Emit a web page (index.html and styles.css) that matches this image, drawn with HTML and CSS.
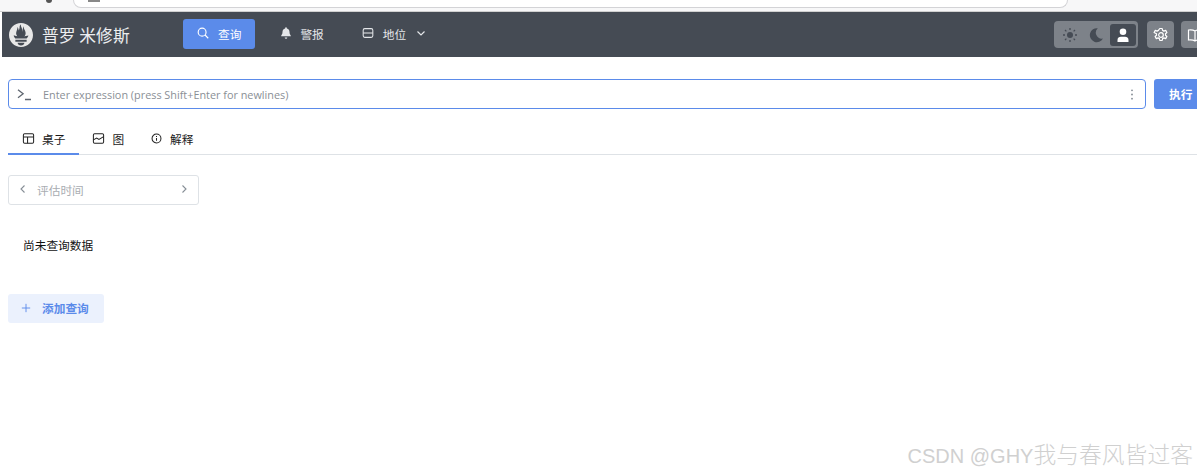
FILE: index.html
```html
<!DOCTYPE html>
<html lang="zh">
<head>
<meta charset="utf-8">
<title>Prometheus</title>
<link rel="stylesheet" href="styles.css">
</head>
<body>
<div class="chrome"><span class="chrome-dot"></span><div class="urlbar"><span class="url-mark"></span></div></div>
<div class="shell">
<header class="topbar">
  <div class="brand">
    <svg class="logo" viewBox="0 0 24 24"><path fill="#e8e8e8" d="M12 0C5.373 0 0 5.372 0 12c0 6.627 5.373 12 12 12s12-5.373 12-12c0-6.628-5.373-12-12-12zm0 22.460c-1.885 0-3.414-1.260-3.414-2.814h6.828c0 1.553-1.528 2.813-3.414 2.813zm5.640-3.745H6.360v-2.046h11.280v2.046zm-.04-3.098H6.391c-.037-.043-.075-.086-.111-.13-1.155-1.401-1.427-2.133-1.690-2.879-.005-.025 1.400.287 2.395.511 0 0 .513.119 1.262.255-.719-.843-1.146-1.915-1.146-3.010 0-2.406 1.845-4.508 1.180-6.207.648.053 1.340 1.367 1.387 3.422.689-.951.977-2.690.977-3.755 0-1.103.727-2.385 1.454-2.429-.648 1.069.168 1.984.894 4.256.272.854.237 2.290.447 3.201.070-1.892.395-4.652 1.595-5.605-.529 1.200.079 2.702.494 3.424.671 1.164 1.078 2.047 1.078 3.716 0 1.119-.413 2.172-1.110 2.996.792-.149 1.340-.283 1.340-.283l2.573-.502s-.374 1.538-1.810 3.019z"/></svg>
    <span class="brand-name">普罗 米修斯</span>
  </div>
  <nav class="nav">
    <a class="nav-item active"><svg class="nav-icon" viewBox="0 0 16 16" fill="none" stroke="currentColor" stroke-width="1.300"><circle cx="7" cy="7" r="4.500"/><path d="M10.300 10.300 14 14"/></svg>查询</a>
    <a class="nav-item bell-item"><svg class="nav-icon" viewBox="0 0 16 16" fill="currentColor"><path d="M8 1.500a1 1 0 0 1 1 1v.300c2 .5 3 2 3 4 0 2.500 1 3.300 1.500 4.200v.8h-11V11c.5-.9 1.500-1.700 1.500-4.200 0-2 1-3.500 3-4v-.3a1 1 0 0 1 1-1zM6.500 13h3a1.500 1.500 0 0 1-3 0z"/></svg>警报</a>
    <a class="nav-item"><svg class="nav-icon" viewBox="0 0 16 16" fill="none" stroke="currentColor" stroke-width="1.200"><rect x="2.500" y="3" width="11" height="10" rx="1.800"/><path d="M2.500 8h11"/></svg>地位<svg class="chev" viewBox="0 0 12 12" fill="none" stroke="currentColor" stroke-width="1.200"><path d="M2.500 4.500 6 8l3.500-3.500"/></svg></a>
  </nav>
  <div class="tools">
    <div class="theme-group">
      <span class="theme-btn"><svg viewBox="0 0 16 16" class="theme-icon"><circle cx="8" cy="8" r="3" fill="#454b54"/><path d="M8 1v2M8 13v2M1 8h2M13 8h2M3 3l1.400 1.400M11.600 11.600 13 13M3 13l1.400-1.400M11.600 4.400 13 3" stroke="#454b54" stroke-width="1.300" fill="none"/></svg></span>
      <span class="theme-btn"><svg viewBox="0 0 16 16" class="theme-icon"><path d="M9.800 1.200A7 7 0 1 0 15 11.500 6 6 0 0 1 9.800 1.200z" fill="#454b54"/></svg></span>
      <span class="theme-btn current"><svg viewBox="0 0 16 16" class="theme-icon"><circle cx="8" cy="4.800" r="3.300" fill="#fff"/><path d="M2.500 15v-2c0-2 1.600-3.200 3.500-3.200h4c1.900 0 3.500 1.200 3.500 3.200v2z" fill="#fff"/></svg></span>
    </div>
    <span class="tool-btn"><svg viewBox="0 0 16 16" class="tool-icon" fill="none" stroke="#fff" stroke-width="1.200"><path d="M6.800 1h2.400l.4 1.900 1.300.7 1.800-.7 1.200 2.100-1.400 1.300v1.400l1.400 1.300-1.200 2.100-1.800-.7-1.300.7-.4 1.900H6.800l-.4-1.900-1.300-.7-1.800.7-1.200-2.100 1.400-1.300V6.300L1.100 5l1.200-2.100 1.800.7 1.300-.7z" stroke-linejoin="round" transform="translate(0 .5)"/><circle cx="8" cy="8" r="2.300"/></svg></span>
    <span class="tool-btn"><svg viewBox="0 0 16 16" class="tool-icon" fill="none" stroke="#fff" stroke-width="1.200"><path d="M8 4C6.500 3 4 2.700 1.500 3v10c2.500-.3 5 0 6.500 1 1.500-1 4-1.300 6.500-1V3C12 2.700 9.500 3 8 4zM8 4v10"/></svg></span>
  </div>
</header>
<main class="content">
  <div class="query-row">
    <div class="expr">
      <svg class="prompt" viewBox="0 0 16 14" fill="none" stroke="#5f6670" stroke-width="1.400"><path d="M1 2l5.500 4.200L1 10.400M8.500 12.400h6.500"/></svg>
      <span class="placeholder">Enter expression (press Shift+Enter for newlines)</span>
      <svg class="dots" viewBox="0 0 4 14" fill="#868e96"><circle cx="2" cy="2.500" r="1"/><circle cx="2" cy="7" r="1"/><circle cx="2" cy="11.500" r="1"/></svg>
    </div>
    <button class="run">执行</button>
  </div>
  <div class="tabs">
    <a class="tab selected"><svg class="tab-icon" viewBox="0 0 14 14" fill="none" stroke="#222" stroke-width="1.100"><rect x="1.500" y="2" width="11" height="10" rx="1.300"/><path d="M1.500 5.500h11M6 5.500V12"/></svg>桌子</a>
    <a class="tab"><svg class="tab-icon" viewBox="0 0 14 14" fill="none" stroke="#222" stroke-width="1.100"><rect x="1.500" y="2" width="11" height="10" rx="1.300"/><path d="M1.500 8.500 5 6.500l2.500 1.500 5-3"/></svg>图</a>
    <a class="tab"><svg class="tab-icon" viewBox="0 0 14 14" fill="none" stroke="#222" stroke-width="1.100"><circle cx="7" cy="7" r="4.800"/><path d="M7 6.500v3M7 4.300v1"/></svg>解释</a>
  </div>
  <div class="eval">
    <svg class="eval-chev" viewBox="0 0 10 10" fill="none" stroke="#868e96" stroke-width="1.100"><path d="M6.500 1.500 3 5l3.500 3.500"/></svg>
    <span class="eval-label">评估时间</span>
    <svg class="eval-chev" viewBox="0 0 10 10" fill="none" stroke="#868e96" stroke-width="1.100"><path d="M3.500 1.500 7 5 3.500 8.500"/></svg>
  </div>
  <p class="nodata">尚未查询数据</p>
  <button class="add"><svg class="add-icon" viewBox="0 0 12 12" fill="none" stroke="#5b8bea" stroke-width="1.100"><path d="M6 1v10M1 6h10"/></svg>添加查询</button>
</main>
</div>
<div class="watermark">CSDN @GHY<span class="watermark-cjk">我与春风皆过客</span></div>
</body>
</html>
```
FILE: styles.css
```css
* { box-sizing: border-box; }
html, body { margin: 0; height: 475px; overflow: hidden; background: #fff; }
body { position: relative; font-family: "Noto Sans CJK SC", "Noto Sans", sans-serif; font-size: 11.7px; color: #1a1a1a; }
.chrome { height: 12px; display: flex; background: #f7f7f8; overflow: hidden; border-bottom: 1px solid #d0d0d0; }
.chrome-dot { width: 6px; height: 3px; margin-left: 46px; background: #555; border-radius: 0 0 3px 3px; }
.urlbar { width: 995px; height: 8px; margin-left: 21px; background: #fff; border: 1px solid #d3d3d6; border-top: 0; border-radius: 0 0 12px 12px; padding-left: 14px; }
.url-mark { display: block; width: 12px; height: 2px; background: #888; }
.shell { padding-left: 2px; width: 1240px; }
.topbar { height: 45px; background: #454b54; display: flex; align-items: center; padding: 0 0 1px 7px; color: #e4e6e9; }
.brand { display: flex; align-items: center; gap: 9px; width: 174px; margin-top: 1px; }
.logo { width: 24px; height: 24px; }
.brand-name { font-size: 16.8px; white-space: nowrap; color: #eceef0; }
.nav { display: flex; align-items: center; }
.nav-item { display: flex; align-items: center; height: 30px; padding: 0 12px 2px; border-radius: 3px; margin-right: 12px; gap: 8px; }
.nav-item.active { background: #5b8bea; color: #fff; padding: 0 14px 2px 13px; }
.nav-item.bell-item { gap: 7px; padding-right: 13px; }
.nav-icon { width: 14px; height: 14px; }
.chev { width: 12px; height: 12px; margin-left: 1px; }
.tools { display: flex; align-items: center; margin: 1px 0 0 603px; gap: 7px; }
.theme-group { display: flex; align-items: center; justify-content: space-between; width: 84px; height: 27px; padding: 2px; margin-right: 2px; background: #7d8289; border-radius: 4px; }
.theme-btn { width: 27px; height: 22px; display: flex; align-items: center; justify-content: center; border-radius: 3px; }
.theme-btn.current { background: #454b54; }
.theme-icon { width: 16px; height: 16px; }
.tool-btn { width: 27px; height: 27px; background: #7d8289; border-radius: 4px; display: flex; align-items: center; justify-content: center; }
.tool-icon { width: 16px; height: 16px; }
.content { padding: 22px 0 0 6px; }
.query-row { display: flex; gap: 8px; height: 30px; }
.expr { width: 1138px; height: 30px; border: 1px solid #5b8bea; border-radius: 4px; display: flex; align-items: center; padding: 0 11px 0 8px; }
.prompt { width: 15px; height: 13px; }
.placeholder { margin-left: 11px; flex: 1; font-family: "Open Sans", "Noto Sans", sans-serif; font-size: 10.85px; color: #8a8f96; }
.dots { width: 4px; height: 13px; }
.run { width: 60px; height: 30px; border: 0; border-radius: 3px; background: #5b8bea; color: #fff; font: 700 11.7px "Noto Sans CJK SC", sans-serif; text-align: left; padding: 0 0 2px 15px; }
.tabs { display: flex; margin-top: 16px; height: 30px; border-bottom: 1px solid #dee2e6; width: 1240px; }
.tab { display: flex; align-items: center; gap: 7px; padding: 0 13px 4px 13px; height: 30px; white-space: nowrap; }
.tab.selected { border-bottom: 2px solid #5b8bea; padding: 0 14px 2px 14px; }
.tab-icon { width: 13px; height: 13px; }
.eval { width: 191px; height: 30px; margin-top: 20px; border: 1px solid #dee2e6; border-radius: 3px; display: flex; align-items: center; padding: 0 9px 2px; }
.eval-chev { width: 10px; height: 10px; }
.eval-label { flex: 1; margin-left: 9px; color: #a9adb2; }
.nodata { margin: 32px 0 0 15px; height: 18px; line-height: 16px; color: #111; }
.add { display: flex; align-items: center; gap: 11px; width: 96px; height: 29px; margin-top: 39px; border: 0; border-radius: 3px; background: #ebf1fd; color: #5b8bea; font: 700 11.7px "Noto Sans CJK SC", sans-serif; padding: 0 13px 2px; }
.add-icon { width: 10px; height: 10px; }
.watermark { position: absolute; right: 4px; top: 441px; font-family: "Liberation Sans", sans-serif; font-size: 20px; line-height: 26px; color: #d0d0d0; white-space: nowrap; }
.watermark-cjk { font-family: "Noto Sans CJK SC", sans-serif; font-size: 22.8px; font-weight: 300; }
```
